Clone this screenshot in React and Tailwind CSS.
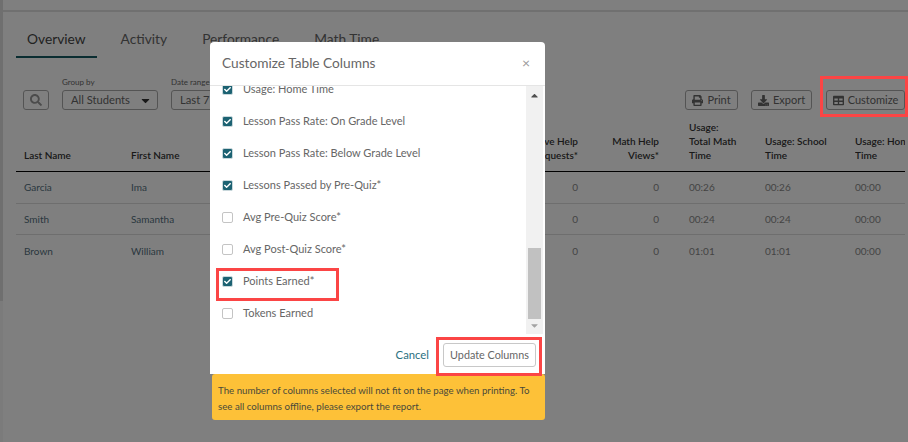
import { FaSearch, FaPrint, FaDownload, FaTable, FaCaretDown, FaCaretUp, FaCheck } from 'react-icons/fa';

const tabs = ['Overview', 'Activity', 'Performance', 'Math Time'];

const students = [
    { last: 'Garcia', first: 'Ima', help: '0', views: '0', total: '00:26', school: '00:26', home: '00:00' },
    { last: 'Smith', first: 'Samantha', help: '0', views: '0', total: '00:24', school: '00:24', home: '00:00' },
    { last: 'Brown', first: 'William', help: '0', views: '0', total: '01:01', school: '01:01', home: '00:00' }
];

const columns = [
    { label: 'Usage: Home Time', checked: true },
    { label: 'Lesson Pass Rate: On Grade Level', checked: true },
    { label: 'Lesson Pass Rate: Below Grade Level', checked: true },
    { label: 'Lessons Passed by Pre-Quiz*', checked: true },
    { label: 'Avg Pre-Quiz Score*', checked: false },
    { label: 'Avg Post-Quiz Score*', checked: false },
    { label: 'Points Earned*', checked: true },
    { label: 'Tokens Earned', checked: false }
];

const gridCols = 'grid grid-cols-[107px_100px_347px_81px_106px_90px_50px]';

const ToolButton = ({ icon, label, className }) => (
    <button className={`h-[20px] flex items-center justify-center gap-1 rounded-[3px] border border-[#a8a8a8] text-[11px] text-[#666] ${className}`}>
        {icon}
        {label}
    </button>
);

const Page = () => (
    <div className="relative h-full border-l-[3px] border-[#f6f6f6] flex flex-col">
        {/* Page scrollbar sliver */}
        <div className="absolute -left-[3px] top-0 w-[3px] h-[301px] bg-[#dedede]" />
        <div className="h-[12px] shrink-0 border-b-2 border-[#e0e0e0]" />

        {/* Tabs */}
        <div className="flex h-[46px] ml-[13px] gap-[13px] text-[13.75px] leading-[18px] text-[#666]">
            {tabs.map((tab, i) => (
                <div key={tab} className={`h-[46px] px-[11px] pt-[18px] ${i === 0 ? 'border-b-2 border-[#145a63] text-[#444]' : ''}`}>
                    {tab}
                </div>
            ))}
        </div>

        {/* Filters */}
        <div className="h-[52px] flex items-end ml-[20px] mr-[3px]">
            <button className="w-[26px] h-[20px] rounded-[3px] border border-[#a8a8a8] flex items-center justify-center text-[#999]">
                <FaSearch className="w-[12px] h-[12px]" />
            </button>
            <div className="ml-[13px] w-[96px]">
                <div className="text-[8px] leading-[10px] mb-[3px] text-[#666]">Group by</div>
                <div className="h-[20px] rounded-[3px] border border-[#a8a8a8] flex items-center justify-between pl-[8px] pr-[5px] text-[11.2px] text-[#666]">
                    All Students
                    <FaCaretDown className="w-[13px] h-[13px] text-[#333]" />
                </div>
            </div>
            <div className="ml-[13px] w-[96px]">
                <div className="text-[8px] leading-[10px] mb-[3px] text-[#666]">Date range</div>
                <div className="h-[20px] rounded-[3px] border border-[#a8a8a8] flex items-center pl-[8px] text-[11.2px] text-[#666]">Last 7 Days</div>
            </div>
            <div className="flex-1" />
            <ToolButton icon={<FaPrint className="w-[11px] h-[11px]" />} label="Print" className="w-[53px]" />
            <ToolButton icon={<FaDownload className="w-[11px] h-[11px]" />} label="Export" className="w-[61px] ml-[13px]" />
            <ToolButton icon={<FaTable className="w-[11px] h-[11px]" />} label="Customize" className="w-[79px] ml-[14px]" />
        </div>

        {/* Table */}
        <div className="ml-[13px] mr-[3px] overflow-hidden text-[10px] leading-[14px]">
            <div className={`${gridCols} pl-[8px] h-[62px] items-end pb-[9px] border-b border-black font-semibold text-[#333]`}>
                <div>Last Name</div>
                <div>First Name</div>
                <div className="text-right">Give Help<br />Requests*</div>
                <div className="text-right">Math Help<br />Views*</div>
                <div className="pl-[30px]">Usage:<br />Total Math<br />Time</div>
                <div>Usage: School<br />Time</div>
                <div className="whitespace-nowrap overflow-hidden">Usage: Home<br />Time</div>
            </div>
            {students.map((s, i) => (
                <div key={s.last} className={`${gridCols} pl-[8px] h-[31.5px] items-center text-[#888] ${i < 2 ? 'border-b border-[#ddd]' : ''}`}>
                    <div className="text-[#557080]">{s.last}</div>
                    <div className="text-[#557080]">{s.first}</div>
                    <div className="text-right">{s.help}</div>
                    <div className="text-right">{s.views}</div>
                    <div className="pl-[30px]">{s.total}</div>
                    <div>{s.school}</div>
                    <div>{s.home}</div>
                </div>
            ))}
        </div>
    </div>
);

const ColumnRow = ({ label, checked }) => (
    <label className="h-[32px] flex items-center gap-[10px] text-[11px] text-[#666]">
        {checked ? (
            <span className="w-[11px] h-[11px] rounded-[2px] bg-[#1c6272] border border-[#c9d8dc] flex items-center justify-center">
                <FaCheck className="w-[7px] h-[7px] text-white" />
            </span>
        ) : (
            <span className="w-[11px] h-[11px] rounded-[2px] bg-white border border-[#c4c4c4]" />
        )}
        {label}
    </label>
);

const Modal = () => (
    <div className="absolute left-[210px] top-[42px] w-[335px] flex flex-col">
        <div className="h-[44px] pb-[1px] bg-white rounded-t-[4px] border-b border-[#e5e5e5] flex items-center justify-between pl-[12px] pr-[15px]">
            <h3 className="text-[13.7px] text-[#666]">Customize Table Columns</h3>
            <span className="text-[14px] leading-none text-[#999]">×</span>
        </div>
        <div className="flex h-[248px] bg-white">
            <div className="flex-1 h-full overflow-hidden">
                <div className="-mt-[13px] pl-[12px]">
                    {columns.map((c) => (
                        <ColumnRow key={c.label} label={c.label} checked={c.checked} />
                    ))}
                </div>
            </div>
            {/* Scrollbar */}
            <div className="w-[17px] mr-[2px] bg-[#f1f1f1] flex flex-col items-center">
                <FaCaretUp className="w-[11px] h-[11px] mt-[4px] text-[#505050]" />
                <div className="w-[13px] h-[71px] mt-[147px] bg-[#c1c1c1]" />
                <FaCaretDown className="w-[11px] h-[11px] mt-[1px] text-[#a3a3a3]" />
            </div>
        </div>
        <div className="h-[40px] bg-white flex items-start justify-end pt-[9px] pr-[9px] gap-[14px]">
            <span className="h-[24px] leading-[24px] text-[11.3px] text-[#2a7080]">Cancel</span>
            <button className="w-[93px] h-[24px] rounded-[3px] border border-[#c8c8c8] text-[10.8px] text-[#666]">Update Columns</button>
        </div>
        <div className="ml-[2px] h-[46px] rounded-[3px] bg-[#fdc138] pl-[6px] pr-[8px] pt-[8px] text-[9.7px] leading-[16px] text-[#4a4a3a]">
            The number of columns selected will not fit on the page when printing. To see all columns offline, please export the report.
        </div>
    </div>
);

const App = () => (
    <div className="relative w-[908px] h-[442px] overflow-hidden bg-white font-['Lato',sans-serif]">
        <Page />
        <div className="absolute inset-0 bg-black/50" />
        <Modal />
        {/* Red annotation boxes */}
        <div className="absolute left-[820px] top-[76px] w-[88px] h-[41px] border-[3px] border-[#fb4545]" />
        <div className="absolute left-[216px] top-[268px] w-[123px] h-[33px] border-[3px] border-[#fb4545]" />
        <div className="absolute left-[436px] top-[337px] w-[106px] h-[39px] border-[3px] border-[#fb4545]" />
    </div>
);

export default App;
